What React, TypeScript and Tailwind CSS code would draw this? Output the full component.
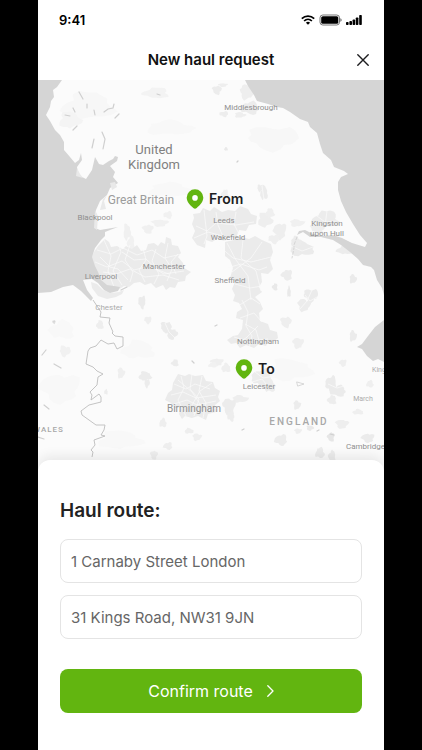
import React from 'react';

type Label = { text: string; x: number; y: number; size: string; };

// map coordinates: origin at 38,80 and 346 x 392 units big
const MAP = { x: 38, y: 80, w: 346, h: 392 };

const place = (x: number, y: number) => ({
  left: `${((x - MAP.x) / MAP.w) * 100}%`,
  top: `${((y - MAP.y) / MAP.h) * 100}%`,
});

const small = 'text-[8px] leading-[10px] text-[#8f8f8f]';
const faint = 'text-[8px] leading-[10px] text-[#acacac]';

const labels: Label[] = [
  { text: 'Middlesbrough', x: 251, y: 108, size: small },
  { text: 'United\nKingdom', x: 154, y: 157, size: 'text-[13px] leading-[15px] text-[#808080]' },
  { text: 'Great Britain', x: 141, y: 200, size: 'text-[12px] leading-[14px] text-[#9c9c9c]' },
  { text: 'Blackpool', x: 95, y: 218, size: small },
  { text: 'Leeds', x: 224, y: 221, size: small },
  { text: 'Wakefield', x: 228, y: 238, size: small },
  { text: 'Kingston\nupon Hull', x: 327, y: 229, size: small },
  { text: 'Manchester', x: 164, y: 267, size: small },
  { text: 'Liverpool', x: 101, y: 277, size: small },
  { text: 'Sheffield', x: 230, y: 281, size: small },
  { text: 'Chester', x: 109, y: 308, size: faint },
  { text: 'Nottingham', x: 258, y: 342, size: small },
  { text: 'Leicester', x: 259, y: 387, size: small },
  { text: 'March', x: 363, y: 399, size: 'text-[7px] leading-[10px] text-[#acacac]' },
  { text: 'Birmingham', x: 194, y: 409, size: 'text-[10px] leading-[12px] text-[#8f8f8f]' },
  { text: 'ENGLAND', x: 299, y: 422, size: 'text-[10px] leading-[12px] font-medium tracking-[2px] text-[#a8a8a8]' },
];

// cut off by the left or right side of the map, so these start at x
const edgeLabels: Label[] = [
  { text: 'WALES', x: 33, y: 430, size: 'text-[8px] leading-[10px] font-medium tracking-[1px] text-[#a8a8a8]' },
  { text: 'King', x: 372, y: 370, size: 'text-[7px] leading-[10px] text-[#acacac]' },
  { text: 'Cambridge', x: 346, y: 447, size: small },
];

// cx, cy, rx, ry, fill
const towns: [number, number, number, number, string][] = [
  [127, 232, 4, 9, '#f0f0f0'],
  [131, 243, 4, 8, '#f1f1f1'],
  [148, 229, 6, 5, '#f0f0f0'],
  [160, 223, 9, 4, '#f1f1f1'],
  [168, 215, 5, 4, '#f1f1f1'],
  [225, 194, 4, 5, '#efefef'],
  [265, 220, 8, 8, '#eeeeee'],
  [270, 213, 5, 5, '#efefef'],
  [280, 231, 7, 9, '#eeeeee'],
  [274, 239, 6, 5, '#efefef'],
  [297, 223, 8, 4, '#f0f0f0'],
  [326, 219, 14, 9, '#ececec'],
  [318, 228, 8, 6, '#eeeeee'],
  [345, 250, 9, 5, '#ececec'],
  [302, 249, 13, 8, '#ebebeb'],
  [296, 242, 6, 6, '#ececec'],
  [287, 275, 6, 6, '#ececec'],
  [275, 287, 3, 4, '#e9e9e9'],
  [289, 292, 2, 6, '#e9e9e9'],
  [353, 279, 4, 5, '#ebebeb'],
  [311, 295, 8, 7, '#ebebeb'],
  [304, 305, 7, 7, '#ececec'],
  [286, 322, 6, 6, '#eeeeee'],
  [298, 343, 6, 6, '#efefef'],
  [217, 362, 7, 4, '#efefef'],
  [226, 368, 5, 5, '#efefef'],
  [262, 378, 11, 10, '#ececec'],
  [270, 386, 6, 7, '#ededed'],
  [240, 399, 9, 4, '#eeeeee'],
  [229, 406, 7, 9, '#ececec'],
  [231, 416, 4, 6, '#ededed'],
  [213, 365, 5, 3, '#f1f1f1'],
  [331, 384, 6, 9, '#ebebeb'],
  [338, 391, 9, 6, '#ebebeb'],
  [332, 400, 5, 5, '#ededed'],
  [353, 336, 4, 6, '#ebebeb'],
  [343, 363, 4, 4, '#efefef'],
  [370, 384, 4, 4, '#efefef'],
  [358, 412, 6, 3, '#efefef'],
  [297, 405, 4, 5, '#ececec'],
  [281, 440, 7, 6, '#ececec'],
  [298, 431, 4, 3, '#eeeeee'],
  [310, 428, 4, 3, '#e9e9e9'],
  [342, 424, 7, 5, '#eeeeee'],
  [331, 437, 4, 5, '#e6e6e6'],
  [368, 438, 7, 5, '#ebebeb'],
  [320, 453, 5, 6, '#ececec'],
  [332, 456, 4, 6, '#ececec'],
  [189, 431, 5, 3, '#eeeeee'],
  [197, 437, 5, 4, '#efefef'],
  [163, 423, 4, 5, '#eeeeee'],
  [168, 446, 5, 4, '#eeeeee'],
  [154, 455, 4, 5, '#efefef'],
  [175, 363, 4, 4, '#ececec'],
  [145, 376, 7, 5, '#ececec'],
  [147, 383, 3, 5, '#ececec'],
  [121, 373, 4, 6, '#efefef'],
  [106, 392, 2, 3, '#ededed'],
  [166, 327, 6, 6, '#ebebeb'],
  [172, 334, 6, 6, '#ebebeb'],
  [142, 302, 4, 7, '#ebebeb'],
  [148, 320, 4, 4, '#efefef'],
  [100, 325, 4, 5, '#eeeeee'],
  [65, 351, 6, 6, '#f1f1f1'],
  [54, 322, 2, 2, '#e2e2e2'],
  [217, 90, 5, 5, '#ececec'],
  [223, 85, 5, 2, '#eeeeee'],
  [224, 114, 5, 3, '#ededed'],
  [247, 92, 8, 8, '#eeeeee'],
  [250, 108, 10, 7, '#ececec'],
  [240, 115, 6, 3, '#eeeeee'],
  [264, 193, 4, 8, '#ececec'],
  [260, 188, 3, 4, '#ececec'],
  [226, 149, 2, 2, '#e9e9e9'],
  [156, 93, 14, 6, '#f3f3f3'],
  [273, 138, 28, 13, '#f7f7f7'],
  [88, 106, 28, 15, '#f7f7f7'],
  [70, 120, 12, 9, '#f4f4f4'],
  [170, 128, 26, 8, '#f8f8f8'],
  [170, 190, 24, 8, '#f8f8f8'],
  [60, 388, 22, 16, '#f8f8f8'],
  [138, 350, 18, 10, '#f8f8f8'],
  [120, 440, 24, 10, '#f8f8f8'],
  [62, 330, 14, 10, '#f8f8f8'],
  [290, 370, 24, 12, '#f8f8f8'],
];

const townShape = (cx: number, cy: number, rx: number, ry: number) => {
  const points: string[] = [];
  for (let i = 0; i < 20; i++) {
    const a = (i / 20) * Math.PI * 2;
    const r = 0.88 + 0.14 * Math.sin(a * 3 + cx) + 0.1 * Math.sin(a * 5 + cy) + 0.06 * Math.sin(a * 8 + cx + cy);
    points.push(`${(cx + Math.cos(a) * rx * r).toFixed(1)},${(cy + Math.sin(a) * ry * r).toFixed(1)}`);
  }
  return points.join(' ');
};

const MapDrawing = () => {
  return (
    <svg
      className="absolute inset-0 h-full w-full"
      viewBox="38 80 346 392"
      preserveAspectRatio="none"
      aria-hidden="true"
    >
      <rect x="38" y="80" width="346" height="392" fill="#fbfbfb" />

      {/* Towns and hills */}
      {towns.map(([cx, cy, rx, ry, fill]) => (
        <polygon key={`${cx}-${cy}`} points={townShape(cx, cy, rx, ry)} fill={fill} />
      ))}

      {/* Cities that run into each other */}
      <g fill="#ebebeb">
        <path d="M94 252l4-6 7-7 4 3 2 5 6-1 6 3 3-3 6 3 5-4 4 6 5-1 2-6 6-1 4 3 3-4 4 2 1-7 5 2 1 6 6 1 3 7-3 4 5 6 1 5 7 4-5 4-1 5-7 1-3 6-5-1-4 3-3-5-7 3-5-5-6 2-5-3-6 1-5 4-5-1-6 4-6-3-6-1-6-4-4-8-4-6-2-8z" />
        <path d="M91 282l6 2 6 6 8 3 8-1 5-2-2 4-6 3-9 2-9-3-6-8z" />
        <path d="M193 214l7-1 3-5 7 3 4-4 8 5 6-2 7 1 5-5 8 3 3 5 6 2-1 8-7 1-3 6-7-1-3 8-7-1-4 4-8-2-5 3-6-2-1 8-8-3-5-7 3-7-3-7 2-6z" />
        <path d="M225 242l9-2 7-3 8 2 6-3 7 4 9 4 2 8-3 8 3 9-5 5-7-1 1 9-3 5 3 5-7 5 5 5 3 7-4 4 1 8 8 3 2 6 7 2 1 6-5 4-4-2-3 6-7-2-5 4-8-3-6 3-4-5-5 1-4-4 6-4 5-1 4-6 1-9-7-2 1-6 5-3-3-6-6-2 2-6-3-6 3-7-5-4 3-10-3-8-5-4z" />
        <path d="M178 374l7 2 4-2 6 2 8-1 3 6 7 1 2 6 5 3-2 6 2 4-5 4 1 7-8 2-2 6-8-4-6 2-7-2-3 3-3-5 2-7-6 1-4-5-6-3 3-7 4-3 1-7z" />
      </g>

      {/* Roads */}
      <g fill="none" stroke="#fbfbfb" strokeWidth="0.7">
        <path d="M97 250l14 4 12-6 14 7 15-5 12 8 18-4M95 262l12 5 15-6 12 9 16-4 14 8 20-3M103 272l13 2 14-5 15 8 18-2 16 5M104 240l7 16-3 15 6 16M118 243l3 9-8 19 9 14M130 245l-5 15 8 12-3 10M143 248l3 12-7 10 6 12M156 249l-4 12 7 13-5 10M168 243l-3 15 7 11-5 12M178 254l-7 8 5 12M100 257l10 10 8 2 10 11M122 252l12 8 12-1 12 11 11 4" />
        <path d="M219 246l14 12 18 4 20-5M227 268l14-4 18 6 8-3M227 243l9 17 12 16 3 24M243 240l-2 18 15 13 5 20M262 242l-11 16-19 14M235 284l15 4 12-2M238 306l13-8 9 6M240 318l14-5 8 9M245 324l11 6 4 14M234 337l14 4 20-2M242 300l6 12-2 14 6 10-4 16M258 326l-12 12-14 8M255 372l8 6 12-2M252 382l10-3 8 10" />
        <path d="M174 384l12 5 9-5 15 5M171 395l12-3 13 6 20-3M174 404l13-4 10 5 19-4M181 376l3 12-6 12 8 16M192 374l-2 15 9 10-5 17M202 376l-3 15 7 12-3 15M193 413l14-2 8-3M178 380l14 12 10 15M212 383l-12 8-8 14" />
        <path d="M196 226l11 5 9-8 20 2 18-3M204 210l3 26-3 8M216 212l2 13 7 16M236 212l-2 12 6 12M194 238l14-6 18 5M291 246l11 5 11-4M305 295l5 6 7-4M312 290l-5 11-7 8M317 216l8 6 12-1M327 211l-2 15M165 323l4 9 6 6M328 384l9 4 7-2M262 186l2 14" />
      </g>

      {/* Sea */}
      <g fill="#d5d5d5">
        <path d="M38 80H62L57 87 53 90 54 97 51 101 50 107 46 115 50 121 55 130 60 135 64 142 64 150 70 157 75 163 79 160 81 153 82 160 77 167 78 175 86 179 92 170 95 157 99 164 103 165 109 161 113 159 115 156 118 157 117 161 110 166 115 172 113 177 118 183 110 188 107 195 100 201 96 210 95 228 100 230 106 229 118 227 110 230 105 232 105 236 101 240 95 248 92 257 95 266 98 272 101 280 107 285 114 286 120 287 118 291 110 293 104 290 98 283 92 279 83 280 87 290 93 298 91 301 85 295 81 291 73 285 63 287 51 292 38 293Z" />
        <path d="M245 80H384V295L382 288 377 280 374 270 371 267 363 265 358 259 350 252 341 245 333 240 321 237 310 237 303 232 297 235 299 231 305 230 313 234 323 236 333 235 342 238 352 243 365 247 367 243 360 235 353 224 346 212 341 201 338 190 338 182 341 177 348 174 344 171 334 167 331 160 323 153 320 144 317 133 310 127 308 122 300 119 290 112 283 108 277 107 268 104 257 101 254 95 248 86Z" />
        <path d="M384 320L375 327 368 336 362 344 357 347 362 349 367 356 373 361 378 359 384 362Z" />
      </g>

      {/* Shoals */}
      <path d="M107 195l-4 4-3 11 6-1-2-8zM95 210l-1 18 3 2 1-14zM110 183l5-1 2 5-5 3zM77 168l-1 8 7 2-3-4z" fill="#e9e9e9" />

      {/* Lakes and rivers */}
      <g fill="none" stroke="#cfcfcf" strokeWidth="1.2" strokeLinecap="round">
        <path d="M79 92l4 7M73 108l2 4M87 104v4M94 110l1 5M104 112l4-3 5-1 1-4M115 118l4-4M65 115l5 1M73 130l4-4M94 139l-2 9M102 132l3 7-2 10M157 94l3 1M127 287l-6 3" />
        <path d="M237 162l1-1M192 361l2 2M46 350l-4 5M54 364l7 4M44 405l5 4M38 437l6 2M215 326l2-1M317 431l2-1M242 430l2-1M54 321v1M330 434l4 1" />
        <path d="M297 237l-3 8v3l-2 10" strokeDasharray="3 2" strokeWidth="0.8" />
        <path d="M297 382l7 2-6 2z" strokeWidth="0.8" />
      </g>

      {/* Welsh border */}
      <path
        d="M93 300l4 6 4 6-1 5 10 1-1 5 4 9-1 1 3 3 8 1v9l-6 3-3-6-6 1-7-4-5 6-6 2-2 3-2 13 7 3 4 4 6 3-5 3-1 8-7 7 2 3-1 5 8-6 2 3v5l-12 3-8 6 1 4 14 10h9l-1 5-3 5 4 1-11 4 1 5-4 5 2 2-1 5"
        fill="none"
        stroke="#bdbdbd"
        strokeWidth="0.9"
      />
    </svg>
  );
};

const Pin = ({ text, x, y }: { text: string; x: number; y: number }) => {
  return (
    <div className="absolute -mt-[10px] -ml-[9px] flex h-5 items-center gap-[5px]" style={place(x, y)}>
      <svg width="18" height="20" viewBox="0 0 18 20" aria-hidden="true">
        <path
          d="M9 .3A8.3 8.3 0 0 0 .7 8.5c0 4.2 3.2 7.6 6.6 10.4a2.6 2.6 0 0 0 3.4 0c3.4-2.8 6.6-6.2 6.6-10.4A8.3 8.3 0 0 0 9 .3Z"
          fill="#62b510"
        />
        <circle cx="9" cy="8.9" r="2.8" fill="#fff" />
      </svg>
      <span className="text-[14px] leading-5 font-semibold text-[#1d1d1f]">{text}</span>
    </div>
  );
};

const StatusBar = () => {
  return (
    <div className="flex h-10 items-center justify-between pr-[22px] pl-[21px]">
      <span className="text-[13px] leading-4 font-semibold text-black">9:41</span>
      <div className="flex items-center gap-1">
        <svg width="14" height="10" viewBox="0 0 14 10" aria-hidden="true">
          <g fill="none" stroke="#000" strokeWidth="1.7">
            <path d="M.8 3.7a9 9 0 0 1 12.4 0" />
            <path d="M3.1 6a5.7 5.7 0 0 1 7.8 0" />
          </g>
          <path d="M7 9.8L4.9 7.7a3 3 0 0 1 4.2 0Z" fill="#000" />
        </svg>
        <svg width="23" height="12" viewBox="0 0 23 12" aria-hidden="true">
          <rect x="1" y="1" width="19.5" height="10" rx="2.8" fill="none" stroke="#666" strokeWidth="0.9" />
          <rect x="2.2" y="2.2" width="17.1" height="7.6" rx="1.6" fill="#000" />
          <path d="M21.4 4.3c.9.3 1.2 1 1.2 1.7s-.3 1.4-1.2 1.7Z" fill="#666" />
        </svg>
        <svg width="16" height="10" viewBox="0 0 16 10" aria-hidden="true">
          <rect x="0" y="7" width="2.6" height="3" rx="0.8" />
          <rect x="3.4" y="6" width="2.6" height="4" rx="0.8" />
          <rect x="6.6" y="4.4" width="2.6" height="5.6" rx="0.8" />
          <rect x="9.8" y="2.4" width="2.6" height="7.6" rx="0.8" />
          <rect x="13.2" y="0" width="2.6" height="10" rx="0.8" />
        </svg>
      </div>
    </div>
  );
};

const App = () => {
  return (
    <div className="min-h-screen bg-black px-[38px] font-['Inter',sans-serif]">
      <main className="flex min-h-screen flex-col bg-white">
        <header>
          <StatusBar />
          <div className="grid h-10 grid-cols-[32px_1fr_32px] items-center px-[5px]">
            <h1 className="col-start-2 text-center text-[15px] leading-5 font-semibold text-[#111]">New haul request</h1>
            <button type="button" aria-label="Close" className="flex h-8 w-8 items-center justify-center">
              <svg width="12" height="12" viewBox="0 0 12 12" aria-hidden="true">
                <path d="M.8 .8l10.4 10.4M11.2 .8L.8 11.2" stroke="#1d1d1f" strokeWidth="1.4" strokeLinecap="round" />
              </svg>
            </button>
          </div>
        </header>

        {/* Map Section */}
        <section className="relative min-h-80 flex-1 overflow-hidden">
          <MapDrawing />
          <div className="font-['Roboto',sans-serif]">
            {labels.map((label) => (
              <span
                key={label.text}
                className={`absolute -translate-x-1/2 -translate-y-1/2 text-center whitespace-pre ${label.size}`}
                style={place(label.x, label.y)}
              >
                {label.text}
              </span>
            ))}
            {edgeLabels.map((label) => (
              <span
                key={label.text}
                className={`absolute -translate-y-1/2 whitespace-pre ${label.size}`}
                style={place(label.x, label.y)}
              >
                {label.text}
              </span>
            ))}
          </div>
          <Pin text="From" x={195} y={199} />
          <Pin text="To" x={244} y={369} />
        </section>

        {/* Route Section */}
        <section className="relative -mt-3 rounded-t-xl bg-white px-[22px] pt-[35px] pb-[37px] shadow-[0_-4px_12px_rgba(0,0,0,0.08)]">
          <h2 className="text-[19px] leading-8 font-semibold text-[#222]">Haul route:</h2>
          <form className="mt-3 flex flex-col gap-3">
            <input
              type="text"
              aria-label="Pickup address"
              defaultValue="1 Carnaby Street London"
              className="h-11 w-full rounded-lg border border-[#e4e4e4] px-[10px] text-[15px] text-[#666] outline-none"
            />
            <input
              type="text"
              aria-label="Delivery address"
              defaultValue="31 Kings Road, NW31 9JN"
              className="h-11 w-full rounded-lg border border-[#e4e4e4] px-[10px] text-[15px] text-[#666] outline-none"
            />
            <button
              type="button"
              className="mt-[18px] flex h-11 w-full items-center justify-center gap-[14px] rounded-lg bg-[#62b510] text-[16px] text-white"
            >
              Confirm route
              <svg width="7" height="12" viewBox="0 0 7 12" fill="none" aria-hidden="true">
                <path d="M.8 .8L6 6 .8 11.2" stroke="#fff" strokeWidth="1.3" strokeLinecap="round" strokeLinejoin="round" />
              </svg>
            </button>
          </form>
        </section>
      </main>
    </div>
  );
};

export default App;
